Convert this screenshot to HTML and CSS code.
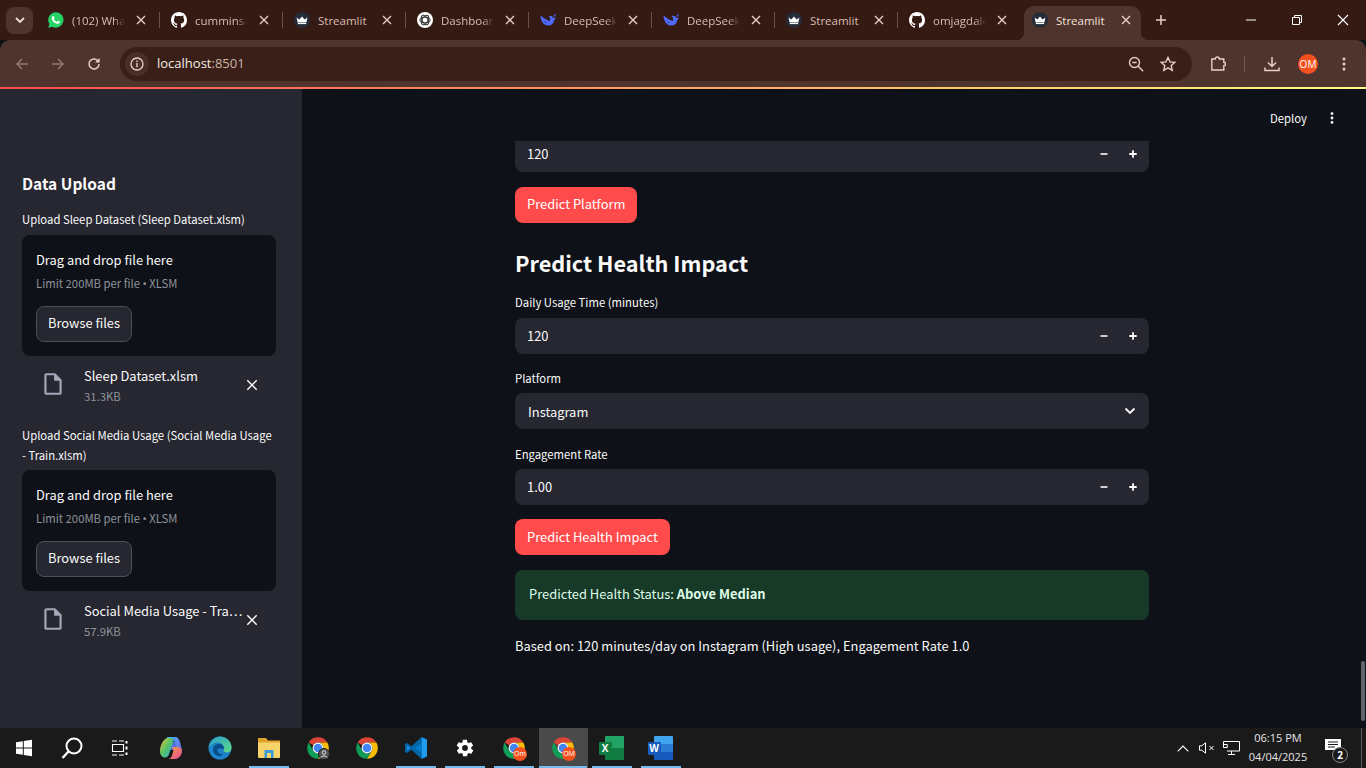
FILE: index.html
```html
<!DOCTYPE html>
<html lang="en">
<head>
  <meta charset="UTF-8" />
  <meta name="viewport" content="width=device-width, initial-scale=1.0"/>
  <title>Streamlit</title>
  <link rel="stylesheet" href="styles.css">
</head>
<body>

  <!-- shared icons -->
  <svg class="defs" aria-hidden="true">
    <symbol id="i-close" viewBox="0 0 10 10"><path d="M1 1l8 8M9 1L1 9" fill="none" stroke="currentColor" stroke-width="1.4"/></symbol>
    <symbol id="i-github" viewBox="0 0 16 16"><path fill="#fff" d="M8 0C3.58 0 0 3.58 0 8c0 3.54 2.29 6.53 5.47 7.71.4.07.55-.17.55-.38 0-.19-.01-.82-.01-1.49-2.01.37-2.53-.49-2.69-.94-.09-.23-.48-.94-.82-1.13-.28-.15-.68-.52-.01-.53.63-.01 1.08.58 1.23.82.72 1.21 1.87.87 2.33.66.07-.52.28-.87.51-1.07-1.78-.2-3.64-.89-3.64-3.95 0-.87.31-1.59.82-2.15-.08-.2-.36-1.02.08-2.12 0 0 .67-.21 2.2.82.64-.18 1.32-.27 2-.27s1.36.09 2 .27c1.53-1.04 2.2-.82 2.2-.82.44 1.1.16 1.92.08 2.12.51.56.82 1.27.82 2.15 0 3.07-1.87 3.75-3.65 3.95.29.25.54.73.54 1.48 0 1.07-.01 1.93-.01 2.2 0 .21.15.46.55.38A8.01 8.01 0 0016 8c0-4.42-3.58-8-8-8z"/></symbol>
    <symbol id="i-streamlit" viewBox="0 0 16 16"><circle cx="8" cy="8" r="8" fill="#262b3a"/><path fill="#fff" d="M2.6 5.4L5.3 7.6 8 4.6l2.7 3 2.7-2.2-1 5.2H3.6z"/><rect x="3.8" y="11" width="8.4" height="1.1" fill="#fff"/></symbol>
    <symbol id="i-whale" viewBox="0 0 16 16"><path fill="#4d6bfe" d="M.4 3.2c.3 5.4 3 10.3 8 10.3 2.9 0 5-1.8 5.5-4.6.3-1.2 1.5-1.6 2-3.5-.8.6-1.7.7-2.7.5-.7-1.6-2.5-2.6-4.5-2 1.2 1 2 3 1.2 5.2C7.200 8.100 3.400 6.300.4 3.200zM6.300 10.800c-1.200-.2-2.400-1-3-2.200 1.100.9 2.200 1.500 3.700 2z"/><path fill="#4d6bfe" d="M15 2l.8.9-1.700 2.100-.8-.7z"/></symbol>
    <symbol id="i-chrome" viewBox="0 0 48 48">
      <path fill="#db4437" d="M24 4A20 20 0 0 1 41.320 14H24a10 10 0 0 0-8.660 5L6.680 14A20 20 0 0 1 24 4z"/>
      <path fill="#fbbc04" d="M41.320 14A20 20 0 0 1 24 44l8.660-15A10 10 0 0 0 24 14z"/>
      <path fill="#0f9d58" d="M6.680 14A20 20 0 0 0 24 44l8.660-15a10 10 0 0 1-17.320 0z"/>
      <circle cx="24" cy="24" r="10" fill="#fff"/><circle cx="24" cy="24" r="8" fill="#4285f4"/>
    </symbol>
    <symbol id="i-file" viewBox="0 0 24 24"><path fill="#a3a8b8" d="M14 2H6c-1.100 0-1.990.9-1.990 2L4 20c0 1.100.89 2 1.990 2H18c1.100 0 2-.9 2-2V8l-6-6zM6 20V4h7v5h5v11H6z"/></symbol>
    <symbol id="i-x" viewBox="0 0 12 12"><path d="M1.300 1.300l9.400 9.400M10.700 1.300l-9.400 9.400" fill="none" stroke="#fafafa" stroke-width="1.500"/></symbol>
    <symbol id="i-minus" viewBox="0 0 10 10"><rect x="1.500" y="4.200" width="7" height="1.600" fill="#fafafa"/></symbol>
    <symbol id="i-plus" viewBox="0 0 10 10"><path fill="#fafafa" d="M4.100 1.300h1.800v2.800h2.800v1.800H5.900v2.800H4.100V5.900H1.300V4.100h2.800z"/></symbol>
  </svg>

  <div class="tabstrip">
    <button class="tab-search"><svg width="10" height="6" viewBox="0 0 10 6"><path d="M1 1l4 4 4-4" fill="none" stroke="#f0dcd4" stroke-width="1.800"/></svg></button>

    <div class="tab">
      <svg class="favicon" viewBox="0 0 16 16"><path fill="#25d366" d="M8 .2A7.700 7.700 0 0 0 1.400 11.900L.2 15.800l4-1.100A7.700 7.700 0 1 0 8 .2z"/><path fill="#fff" d="M5.400 3.900c-.3 0-.8.200-1.100.6-.8.900-.8 2.200-.1 3.400 1 1.700 2.300 3 4.100 3.700 1.300.5 2.500.3 3.200-.5.400-.5.500-1 .4-1.400l-1.800-.9c-.2-.1-.4 0-.5.100l-.6.800c-.2.200-.3.200-.5.100-1.100-.5-2-1.300-2.600-2.300-.1-.2 0-.3.100-.4l.5-.6c.1-.2.100-.3 0-.5l-.7-1.700c-.1-.3-.2-.4-.4-.4z"/></svg>
      <span class="tab-title tab-fade">(102) Wha</span>
      <svg class="tab-close"><use href="#i-close"/></svg>
    </div>
    <div class="tab">
      <svg class="favicon"><use href="#i-github"/></svg>
      <span class="tab-title tab-fade">cummins-</span>
      <svg class="tab-close"><use href="#i-close"/></svg>
    </div>
    <div class="tab">
      <svg class="favicon"><use href="#i-streamlit"/></svg>
      <span class="tab-title">Streamlit</span>
      <svg class="tab-close"><use href="#i-close"/></svg>
    </div>
    <div class="tab">
      <svg class="favicon" viewBox="0 0 16 16"><circle cx="8" cy="8" r="8" fill="#fff"/><g fill="none" stroke="#333" stroke-width="1"><ellipse cx="8" cy="8" rx="5.200" ry="2.800"/><ellipse cx="8" cy="8" rx="5.200" ry="2.800" transform="rotate(60 8 8)"/><ellipse cx="8" cy="8" rx="5.200" ry="2.800" transform="rotate(120 8 8)"/></g></svg>
      <span class="tab-title tab-fade">Dashboar</span>
      <svg class="tab-close"><use href="#i-close"/></svg>
    </div>
    <div class="tab">
      <svg class="favicon"><use href="#i-whale"/></svg>
      <span class="tab-title tab-fade">DeepSeek</span>
      <svg class="tab-close"><use href="#i-close"/></svg>
    </div>
    <div class="tab">
      <svg class="favicon"><use href="#i-whale"/></svg>
      <span class="tab-title tab-fade">DeepSeek</span>
      <svg class="tab-close"><use href="#i-close"/></svg>
    </div>
    <div class="tab">
      <svg class="favicon"><use href="#i-streamlit"/></svg>
      <span class="tab-title">Streamlit</span>
      <svg class="tab-close"><use href="#i-close"/></svg>
    </div>
    <div class="tab tab-last">
      <svg class="favicon"><use href="#i-github"/></svg>
      <span class="tab-title tab-fade">omjagdale</span>
      <svg class="tab-close"><use href="#i-close"/></svg>
    </div>
    <div class="tab tab-active">
      <svg class="favicon"><use href="#i-streamlit"/></svg>
      <span class="tab-title">Streamlit</span>
      <svg class="tab-close"><use href="#i-close"/></svg>
    </div>

    <svg class="new-tab" width="12" height="12" viewBox="0 0 12 12"><path d="M6 1v10M1 6h10" stroke="#e8cfc6" stroke-width="1.500"/></svg>

    <div class="win-controls">
      <div class="win-btn"><svg width="10" height="10" viewBox="0 0 10 10"><path d="M0 5h10" stroke="#fff"/></svg></div>
      <div class="win-btn"><svg width="10" height="10" viewBox="0 0 10 10"><path d="M.5 2.500h7v7h-7zM2.500 2.500v-2h7v7h-2" fill="none" stroke="#fff"/></svg></div>
      <div class="win-btn"><svg width="12" height="12" viewBox="0 0 12 12"><path d="M1 1l10 10M11 1L1 11" stroke="#fff" stroke-width="1.100"/></svg></div>
    </div>
  </div>

  <div class="toolbar">
    <div class="tool-btn"><svg width="14" height="14" viewBox="0 0 14 14"><path d="M13 7H2M7 2L2 7l5 5" fill="none" stroke="#8f7870" stroke-width="1.500"/></svg></div>
    <div class="tool-btn"><svg width="14" height="14" viewBox="0 0 14 14"><path d="M1 7h11M7 2l5 5-5 5" fill="none" stroke="#8f7870" stroke-width="1.500"/></svg></div>
    <div class="tool-btn"><svg width="14" height="14" viewBox="0 0 14 14"><path d="M12 7a5 5 0 1 1-1.500-3.600L12 5" fill="none" stroke="#e8cfc6" stroke-width="1.500"/><path d="M12.600 1v4.600H8z" fill="#e8cfc6"/></svg></div>

    <div class="omnibox">
      <div class="site-info"><svg width="14" height="14" viewBox="0 0 14 14"><circle cx="7" cy="7" r="6" fill="none" stroke="#e8cfc6" stroke-width="1.300"/><path d="M7 6v4.200M7 3.600v1.400" stroke="#e8cfc6" stroke-width="1.400"/></svg></div>
      <span class="url">localhost<span class="url-port">:8501</span></span>
      <svg class="omni-icon omni-zoom" width="16" height="16" viewBox="0 0 16 16"><circle cx="6.500" cy="6.500" r="5" fill="none" stroke="#e8cfc6" stroke-width="1.400"/><path d="M10.200 10.200l5 5M4.300 6.500h4.400" stroke="#e8cfc6" stroke-width="1.400"/></svg>
      <svg class="omni-icon" width="16" height="16" viewBox="0 0 16 16"><path d="M8 1.500l2 4.400 4.800.5-3.600 3.200 1 4.700L8 11.900l-4.200 2.400 1-4.700L1.200 6.400 6 5.900z" fill="none" stroke="#e8cfc6" stroke-width="1.400"/></svg>
    </div>

    <div class="tool-btn tool-ext"><svg width="16" height="16" viewBox="0 0 16 16"><path d="M1 3.500h3.500a2 2 0 0 1 4 0H13v3.300a1.700 1.700 0 0 1 0 3.400v4.300H1z" transform="translate(.8 -.5)" fill="none" stroke="#e8cfc6" stroke-width="1.400"/></svg></div>
    <div class="tool-sep"></div>
    <div class="tool-btn"><svg width="16" height="16" viewBox="0 0 16 16"><path d="M8 1v9M4 6.500L8 10.500l4-4M1 11.500v3h14v-3" fill="none" stroke="#e8cfc6" stroke-width="1.500"/></svg></div>
    <div class="tool-btn"><div class="avatar">OM</div></div>
    <div class="tool-btn"><svg width="4" height="14" viewBox="0 0 4 14"><circle cx="2" cy="2" r="1.500" fill="#e8cfc6"/><circle cx="2" cy="7" r="1.500" fill="#e8cfc6"/><circle cx="2" cy="12" r="1.500" fill="#e8cfc6"/></svg></div>
  </div>
  <div class="decoration"></div>

  <div class="app">
    <aside class="sidebar">
      <h3 class="side-title">Data Upload</h3>

      <label class="side-label">Upload Sleep Dataset (Sleep Dataset.xlsm)</label>
      <div class="dropzone">
        <div class="drop-title">Drag and drop file here</div>
        <div class="drop-limit">Limit 200MB per file <span class="dot">•</span> XLSM</div>
        <button class="browse">Browse files</button>
      </div>
      <div class="file-row">
        <svg class="file-icon"><use href="#i-file"/></svg>
        <div class="file-info">
          <div class="file-name">Sleep Dataset.xlsm</div>
          <div class="file-size">31.3KB</div>
        </div>
        <svg class="file-x"><use href="#i-x"/></svg>
      </div>

      <label class="side-label side-label-next">Upload Social Media Usage (Social Media Usage - Train.xlsm)</label>
      <div class="dropzone">
        <div class="drop-title">Drag and drop file here</div>
        <div class="drop-limit">Limit 200MB per file <span class="dot">•</span> XLSM</div>
        <button class="browse">Browse files</button>
      </div>
      <div class="file-row">
        <svg class="file-icon"><use href="#i-file"/></svg>
        <div class="file-info">
          <div class="file-name">Social Media Usage - Tra…</div>
          <div class="file-size">57.9KB</div>
        </div>
        <svg class="file-x"><use href="#i-x"/></svg>
      </div>
    </aside>

    <main class="main">
      <header class="main-header">
        <span class="deploy">Deploy</span>
        <svg class="main-menu" width="4" height="12" viewBox="0 0 4 12"><circle cx="2" cy="1.600" r="1.400" fill="#fafafa"/><circle cx="2" cy="6" r="1.400" fill="#fafafa"/><circle cx="2" cy="10.400" r="1.400" fill="#fafafa"/></svg>
      </header>

      <div class="content">
        <div class="number-input number-clipped">
          <span class="value">120</span>
          <svg class="step step-minus"><use href="#i-minus"/></svg>
          <svg class="step"><use href="#i-plus"/></svg>
        </div>
        <button class="primary primary-first">Predict Platform</button>

        <h2 class="section-title">Predict Health Impact</h2>

        <div class="field field-first">
          <label>Daily Usage Time (minutes)</label>
          <div class="number-input">
            <span class="value">120</span>
            <svg class="step step-minus"><use href="#i-minus"/></svg>
            <svg class="step"><use href="#i-plus"/></svg>
          </div>
        </div>

        <div class="field field-select">
          <label>Platform</label>
          <div class="select">
            <span>Instagram</span>
            <svg width="12" height="8" viewBox="0 0 12 8"><path d="M1.500 1.500L6 6l4.500-4.500" fill="none" stroke="#fafafa" stroke-width="1.800"/></svg>
          </div>
        </div>

        <div class="field">
          <label>Engagement Rate</label>
          <div class="number-input">
            <span class="value">1.00</span>
            <svg class="step step-minus"><use href="#i-minus"/></svg>
            <svg class="step"><use href="#i-plus"/></svg>
          </div>
        </div>

        <button class="primary primary-second">Predict Health Impact</button>

        <div class="alert">Predicted Health Status: <strong>Above Median</strong></div>

        <p class="based">Based on: 120 minutes/day on Instagram (High usage), Engagement Rate 1.0</p>
      </div>
      <div class="scroll-thumb"></div>
    </main>
  </div>

  <footer class="taskbar">
    <div class="task-sys">
      <svg width="18" height="18" viewBox="0 0 18 18"><path fill="#fff" d="M1 3.200l6.800-1v6.300H1zM8.800 2l8.200-1.200v7.700H8.800zM1 9.500h6.800v6.300L1 14.800zM8.800 9.500H17v7.700L8.800 16z"/></svg>
    </div>
    <div class="task-sys">
      <svg width="24" height="24" viewBox="0 0 24 24"><circle cx="14" cy="10" r="7.500" fill="none" stroke="#fff" stroke-width="2"/><path d="M8.700 15.300L2.500 22" stroke="#fff" stroke-width="2.400"/></svg>
    </div>
    <div class="task-sys">
      <svg width="18" height="16" viewBox="0 0 18 16"><path d="M1.500 4.500h11v7h-11zM1 1h5M8 1h5M1 15h5M8 15h5" fill="none" stroke="#fff" stroke-width="1.100"/><path d="M15.500 1v2.500M15.500 6.500v3M15.500 12.500V15" stroke="#fff" stroke-width="2"/></svg>
    </div>

    <div class="task-apps">
      <div class="task-app">
        <svg width="24" height="24" viewBox="0 0 24 24"><defs><linearGradient id="cp-a" x1="0" y1="0" x2="1" y2="1"><stop offset="0" stop-color="#3fb7f0"/><stop offset="1" stop-color="#7a5be8"/></linearGradient><linearGradient id="cp-b" x1="0" y1="0" x2="1" y2="1"><stop offset="0" stop-color="#f5c33b"/><stop offset=".5" stop-color="#4fc36a"/><stop offset="1" stop-color="#3fa7e0"/></linearGradient><linearGradient id="cp-c" x1="0" y1="0" x2="1" y2="1"><stop offset="0" stop-color="#f7a13a"/><stop offset="1" stop-color="#e2479c"/></linearGradient></defs><path fill="#4f6fe0" d="M8 6h8l3 8H6z"/><path fill="url(#cp-a)" d="M8 1h8c3 0 4 2 5 5l2 8c0 3-2 4-4 3l-3-10c-.5-2-1.500-3-3-3H8z"/><path fill="url(#cp-b)" d="M9 2h2c2 0 3 1 3.500 3L10 18c-.5 2-2 3.500-4 3.500C3 21.500 1 19 1 15 1 9 5 2 9 2z"/><path fill="url(#cp-c)" d="M13 11h5c3 0 5 2 5 4 0 4-3 8-7 8H9c2 0 3.500-1.500 4-3.500l1.500-5z"/></svg>
      </div>
      <div class="task-app">
        <svg width="24" height="24" viewBox="0 0 24 24"><defs><linearGradient id="ed-a" x1="0" y1="1" x2="1" y2="0"><stop offset="0" stop-color="#1f8fd8"/><stop offset="1" stop-color="#1a6cb0"/></linearGradient><linearGradient id="ed-b" x1="0" y1="0" x2="1" y2="1"><stop offset="0" stop-color="#2a9fc9"/><stop offset="1" stop-color="#5fdc86"/></linearGradient></defs><circle cx="12" cy="12" r="11.500" fill="url(#ed-a)"/><path fill="#0b4f8a" d="M5 14c0-4 3-6 6-6 3 0 5 2 5 4.500h-5c-1.500 0-2 1-1.500 2.500.6 2 3 3.500 6 3.500-2 1.500-4 2-5.500 1.500C7 19 5 17 5 14z"/><path fill="url(#ed-b)" d="M12 .5c6.500 0 11.500 5 11.500 11 0 3-2 5-5 5-2 0-3-.8-3-1.500 0-.5.700-1 .700-2.500C16.200 9 13 6.500 9.500 6.500 6 6.500 3 8.500 1.200 11.500 2 5.500 6.500.5 12 .5z"/></svg>
      </div>
      <div class="task-app task-open">
        <svg width="24" height="22" viewBox="0 0 24 22"><path fill="#e0a32e" d="M1 1h8l2 2.500h12V8H1z"/><path fill="#f7d46a" d="M1 5.500h22V20a1 1 0 0 1-1 1H2a1 1 0 0 1-1-1z"/><path fill="#3a9ad9" d="M7.500 13h9v8h-2.500v-5h-4v5H7.500z"/></svg>
      </div>
      <div class="task-app">
        <svg class="chrome-icon"><use href="#i-chrome"/></svg>
        <svg class="profile-badge" width="12" height="12" viewBox="0 0 12 12"><circle cx="6" cy="6" r="5.500" fill="#555" stroke="#222"/><circle cx="6" cy="4.500" r="1.800" fill="none" stroke="#ddd"/><path d="M2.800 9.500c.8-2 5.600-2 6.400 0" fill="none" stroke="#ddd"/></svg>
      </div>
      <div class="task-app">
        <svg class="chrome-icon"><use href="#i-chrome"/></svg>
      </div>
      <div class="task-app task-open">
        <svg width="24" height="24" viewBox="0 0 24 24"><path fill="#0065a9" d="M17.500 1L7.500 10.200 3 7 1 8v8l2 1 4.500-3.200 10 9.200z"/><path fill="#1f9cf0" d="M17.500 1L23 3.500v17L17.500 23zM3.200 9.800v4.400L6 12z"/><path fill="#007acc" d="M17.500 7v10l-6.500-5z"/></svg>
      </div>
      <div class="task-app task-open">
        <svg width="20" height="20" viewBox="0 0 24 24"><path fill="#fff" d="M19.400 13c.1-.3.100-.7.100-1s0-.7-.1-1l2.100-1.600c.2-.2.200-.4.100-.6l-2-3.500c-.1-.2-.4-.3-.6-.2l-2.500 1c-.5-.4-1.100-.7-1.700-1l-.4-2.700c0-.2-.2-.4-.5-.4h-4c-.3 0-.5.200-.5.400l-.4 2.700c-.6.300-1.200.6-1.700 1l-2.500-1c-.2-.1-.5 0-.6.200l-2 3.500c-.1.200-.1.400.1.600L4.600 11c-.1.300-.1.700-.1 1s0 .7.100 1l-2.100 1.600c-.2.200-.2.400-.1.600l2 3.500c.1.200.4.300.6.200l2.500-1c.5.400 1.100.7 1.700 1l.4 2.700c0 .2.200.4.500.4h4c.3 0 .5-.2.500-.4l.4-2.700c.6-.3 1.200-.6 1.700-1l2.500 1c.2.100.5 0 .6-.2l2-3.500c.1-.2.100-.4-.1-.6zM12 15.500a3.500 3.500 0 1 1 0-7 3.500 3.500 0 0 1 0 7z"/></svg>
      </div>
      <div class="task-app task-open">
        <svg class="chrome-icon"><use href="#i-chrome"/></svg>
        <span class="om-badge">Om</span>
      </div>
      <div class="task-app task-open task-active">
        <svg class="chrome-icon"><use href="#i-chrome"/></svg>
        <span class="om-badge">OM</span>
      </div>
      <div class="task-app task-open">
        <div class="office">
          <div class="office-sheet office-sheet-xl"></div>
          <span class="office-letter office-letter-xl">X</span>
        </div>
      </div>
      <div class="task-app task-open">
        <div class="office">
          <div class="office-sheet office-sheet-wd"></div>
          <span class="office-letter office-letter-wd">W</span>
        </div>
      </div>
    </div>

    <div class="tray">
      <div class="tray-item tray-caret"><svg width="12" height="7" viewBox="0 0 12 7"><path d="M.7 6.300L6 1l5.300 5.300" fill="none" stroke="#fff" stroke-width="1.100"/></svg></div>
      <div class="tray-item tray-sound"><svg width="16" height="12" viewBox="0 0 16 12"><path d="M.5 3.800h2.300L6.500.8v10.400L2.800 8.200H.5z" fill="none" stroke="#fff"/><path d="M10.500 4l4 4M14.500 4l-4 4" stroke="#fff"/></svg></div>
      <div class="tray-item tray-net"><svg width="17" height="14" viewBox="0 0 17 14"><path d="M.5.500h16v9.500H4M8.500 10v3M5 13.500h7M.5.500v6h3.800v-3H.5" fill="none" stroke="#fff"/></svg></div>
      <div class="clock">
        <span>06:15 PM</span>
        <span>04/04/2025</span>
      </div>
      <div class="notif">
        <svg width="16" height="14" viewBox="0 0 16 14"><path fill="#fff" d="M0 0h16v11h-4l-3 3v-3H0z"/><path d="M3 3h10M3 5.500h10M3 8h7" stroke="#1a1a1a"/></svg>
        <span class="notif-count">2</span>
      </div>
      <div class="show-desktop"></div>
    </div>
  </footer>

</body>
</html>
```

FILE: styles.css
```css
* {
  box-sizing: border-box;
}

html, body {
  margin: 0;
  height: 768px;
  overflow: hidden;
}

body {
  display: flex;
  flex-direction: column;
  background-color: #0e1117;
  color: #fafafa;
  font-family: "Noto Sans CJK SC", "Noto Sans", sans-serif;
  font-size: 12.9px;
}

.defs {
  position: absolute;
  width: 0;
  height: 0;
}

button {
  font-family: inherit;
  border: none;
}

/* browser chrome */
.tabstrip {
  position: relative;
  z-index: 0;
  display: flex;
  align-items: center;
  height: 40px;
  flex: none;
  background-color: #351a14;
  font-family: "Open Sans", sans-serif;
  font-size: 11.5px;
}

.tab-search {
  display: flex;
  align-items: center;
  justify-content: center;
  width: 27px;
  height: 27px;
  margin: 0 4px 0 6px;
  padding: 0;
  background-color: #4e342c;
  border-radius: 8px;
}

.tab {
  position: relative;
  display: flex;
  align-items: center;
  width: 123px;
  height: 40px;
  padding-left: 11px;
  color: #d9bdb3;
}

.tab::after {
  content: "";
  position: absolute;
  right: 0;
  top: 12px;
  width: 1px;
  height: 16px;
  background-color: #6a5048;
}

.tab-last::after,
.tab-active::after {
  display: none;
}

.favicon {
  flex: none;
  width: 16px;
  height: 16px;
}

.tab-title {
  flex: none;
  width: 53px;
  margin-left: 8px;
  white-space: nowrap;
}

.tab-fade {
  -webkit-mask-image: linear-gradient(to right, #000 78%, transparent);
  mask-image: linear-gradient(to right, #000 78%, transparent);
}

.tab-close {
  flex: none;
  width: 10px;
  height: 10px;
  margin-left: 11px;
  color: #e8cfc6;
}

.tab-active {
  align-self: flex-end;
  width: 117px;
  height: 34px;
  margin-left: 3px;
  padding: 0 0 6px 8px;
  background-color: #4e342c;
  border-radius: 10px 10px 0 0;
  color: #f3e2dc;
}

.tab-active::before {
  content: "";
  position: absolute;
  left: -8px;
  right: -8px;
  bottom: 0;
  height: 8px;
  z-index: -1;
  background:
    radial-gradient(circle at 0 0, transparent 8px, #4e342c 8.5px) left / 8px 8px no-repeat,
    radial-gradient(circle at 100% 0, transparent 8px, #4e342c 8.5px) right / 8px 8px no-repeat;
}

.tab-active .tab-close {
  margin-left: 12px;
}

.new-tab {
  margin-left: 14px;
}

.win-controls {
  display: flex;
  margin-left: auto;
}

.win-btn {
  display: flex;
  align-items: center;
  justify-content: center;
  width: 46px;
  height: 40px;
}

.toolbar {
  display: flex;
  align-items: center;
  flex: none;
  height: 47px;
  padding-left: 4px;
  background-color: #4e342c;
  border-radius: 10px 10px 0 0;
  position: relative;
}

.tool-btn {
  display: flex;
  align-items: center;
  justify-content: center;
  flex: none;
  width: 36px;
  height: 34px;
}

.omnibox {
  display: flex;
  align-items: center;
  flex: none;
  width: 1072px;
  height: 34px;
  margin-left: 8px;
  padding: 0 16px 0 5px;
  background-color: #3a1f19;
  border-radius: 17px;
}

.site-info {
  display: flex;
  align-items: center;
  justify-content: center;
  width: 24px;
  height: 24px;
  background-color: #4a2e27;
  border-radius: 50%;
}

.url {
  margin-left: 8px;
  padding-bottom: 2px;
  font-family: "Open Sans", sans-serif;
  font-size: 13px;
  color: #f6ebe6;
}

.url-port {
  color: #cdb3a9;
}

.omni-zoom {
  margin-left: auto;
}

.omni-icon + .omni-icon {
  margin-left: 16px;
}

.tool-ext {
  margin-left: 8px;
}

.tool-sep {
  flex: none;
  width: 1px;
  height: 16px;
  margin: 0 9px 0 8px;
  background-color: #735a51;
}

.avatar {
  display: flex;
  align-items: center;
  justify-content: center;
  width: 20px;
  height: 20px;
  background-color: #f4511e;
  border-radius: 50%;
  color: #fff;
  font-family: "Open Sans", sans-serif;
  font-size: 10px;
}

.decoration {
  flex: none;
  height: 2px;
  background: linear-gradient(to right, #ff4b4b, #fffd80);
}

/* streamlit app */
.app {
  display: flex;
  flex: 1;
  min-height: 0;
}

.sidebar {
  flex: none;
  width: 302px;
  padding: 80px 26px 0 22px;
  background-color: #262730;
}

.side-title {
  margin: 0;
  font-size: 15.5px;
  font-weight: 600;
  line-height: 28px;
}

.side-label {
  display: block;
  margin: 12px 0 6px;
  font-size: 11.3px;
  line-height: 20px;
}

.side-label-next {
  margin: 19px 0 5px;
}

.dropzone {
  height: 121px;
  padding: 14px 14px 0;
  background-color: #0e1117;
  border-radius: 8px;
}

.drop-title {
  line-height: 21px;
}

.drop-limit {
  height: 20px;
  margin-top: 3px;
  font-size: 11.3px;
  line-height: 20px;
  color: #8f939c;
}

.dot {
  font-family: "Noto Sans", sans-serif;
}

.browse {
  display: block;
  width: 96px;
  height: 36px;
  margin-top: 13px;
  padding: 0 0 4px;
  background-color: #262730;
  border: 1px solid #4c4e58;
  border-radius: 8px;
  color: #fafafa;
  font-size: 12.9px;
}

.file-row {
  display: flex;
  align-items: center;
  height: 50px;
  padding: 10px 0 0 18px;
}

.file-icon {
  flex: none;
  width: 26px;
  height: 26px;
  margin-bottom: 4px;
}

.file-info {
  flex: none;
  width: 158px;
  margin-left: 18px;
}

.file-name {
  line-height: 20px;
  white-space: nowrap;
}

.file-size {
  font-size: 11.3px;
  line-height: 20px;
  color: #8f939c;
}

.file-x {
  flex: none;
  width: 12px;
  height: 12px;
  margin: 0 0 2px 4px;
}

.main {
  position: relative;
  flex: 1;
  min-width: 0;
  background-color: #0e1117;
}

.main-header {
  display: flex;
  align-items: center;
  justify-content: flex-end;
  height: 52px;
  padding: 6px 32px 0 0;
}

.deploy {
  font-size: 11.3px;
}

.main-menu {
  margin-left: 23px;
}

.content {
  width: 634px;
  margin-left: 213px;
}

.number-input,
.select {
  display: flex;
  align-items: center;
  height: 36px;
  background-color: #262730;
  border-radius: 8px;
}

.number-input {
  padding: 0 11px 0 12px;
}

.number-clipped {
  height: 31px;
  border-radius: 0 0 8px 8px;
}

.number-clipped .step {
  margin-bottom: 5px;
}

.value {
  flex: 1;
  padding-bottom: 2px;
}

.number-clipped .value {
  padding-bottom: 7px;
}

.step {
  flex: none;
  width: 10px;
  height: 10px;
}

.step-minus {
  margin-right: 19px;
}

.select {
  justify-content: space-between;
  padding: 0 13px;
}

.primary {
  display: block;
  height: 36px;
  padding: 0 12px 3px;
  background-color: #ff4b4b;
  border-radius: 8px;
  color: #fff;
  font-size: 12.9px;
}

.primary-first {
  margin-top: 15px;
}

.primary-second {
  margin-top: 14px;
  padding-bottom: 2px;
}

.section-title {
  margin: 22px 0 0;
  font-size: 21.7px;
  font-weight: 600;
  line-height: 36px;
}

.field {
  margin-top: 15px;
}

.field-first {
  margin-top: 11px;
}

.field label {
  display: block;
  margin-bottom: 5px;
  font-size: 11.3px;
  line-height: 20px;
}

.field-first label {
  margin-bottom: 6px;
}

.field-select {
  margin-top: 14px;
}

.alert {
  height: 50px;
  margin-top: 15px;
  padding: 0 14px;
  background-color: #173928;
  border-radius: 8px;
  color: #dffde9;
  line-height: 48px;
}

.based {
  margin: 14px 0 0;
  line-height: 24px;
}

.scroll-thumb {
  position: absolute;
  right: 1px;
  top: 572px;
  width: 4px;
  height: 60px;
  background-color: #62656c;
  border-radius: 2px;
}

/* windows taskbar */
.taskbar {
  display: flex;
  flex: none;
  height: 40px;
  background-color: #1a1a1a;
}

.task-sys {
  display: flex;
  align-items: center;
  justify-content: center;
  width: 48px;
}

.task-apps {
  display: flex;
  margin-left: 3px;
}

.task-app {
  position: relative;
  display: flex;
  align-items: center;
  justify-content: center;
  width: 49px;
  padding-right: 2px;
}

.task-open::after {
  content: "";
  position: absolute;
  left: 4px;
  right: 5px;
  bottom: 0;
  height: 2px;
  background-color: #76b9ed;
}

.task-active {
  background-color: #4a4a4a;
}

.task-active::after {
  left: 0;
  right: 1px;
}

.chrome-icon {
  width: 26px;
  height: 26px;
}

.profile-badge {
  position: absolute;
  left: 24px;
  top: 20px;
}

.om-badge {
  position: absolute;
  left: 23px;
  top: 19px;
  width: 14px;
  height: 14px;
  background-color: #f4511e;
  border-radius: 50%;
  color: #fff;
  font-family: "Open Sans", sans-serif;
  font-size: 7px;
  line-height: 14px;
  text-align: center;
}

.office {
  position: relative;
  width: 26px;
  height: 24px;
}

.office-sheet {
  position: absolute;
  left: 6px;
  top: 0;
  width: 19px;
  height: 24px;
  border-radius: 1px;
}

.office-sheet-xl {
  background: linear-gradient(#21a366 50%, #107c41 50%);
}

.office-sheet-wd {
  background: linear-gradient(#41a5ee 33%, #2b7cd3 33% 66%, #185abd 66%);
}

.office-letter {
  position: absolute;
  left: 0;
  top: 6px;
  width: 13px;
  height: 13px;
  border-radius: 1px;
  color: #fff;
  font-family: "Open Sans", sans-serif;
  font-size: 10px;
  font-weight: 700;
  line-height: 13px;
  text-align: center;
}

.office-letter-xl {
  background-color: #107c41;
}

.office-letter-wd {
  background-color: #185abd;
}

.tray {
  display: flex;
  margin-left: auto;
  color: #fff;
  font-family: "Open Sans", sans-serif;
  font-size: 11px;
}

.tray-item {
  display: flex;
  align-items: center;
  justify-content: center;
}

.tray-caret {
  width: 24px;
}

.tray-sound {
  width: 23px;
}

.tray-net {
  width: 26px;
}

.clock {
  display: flex;
  flex-direction: column;
  align-items: center;
  justify-content: center;
  width: 68px;
  padding-bottom: 2px;
  line-height: 19px;
  color: #e6e6e6;
}

.notif {
  position: relative;
  display: flex;
  align-items: center;
  justify-content: center;
  width: 49px;
  padding: 0 7px 4px 0;
}

.notif-count {
  position: absolute;
  left: 20px;
  top: 19px;
  width: 16px;
  height: 16px;
  background-color: #1a1a1a;
  border: 1px solid #888;
  border-radius: 50%;
  font-size: 10px;
  font-weight: 700;
  line-height: 14px;
  text-align: center;
}

.show-desktop {
  width: 5px;
  border-left: 1px solid #5a5a5a;
}
```
